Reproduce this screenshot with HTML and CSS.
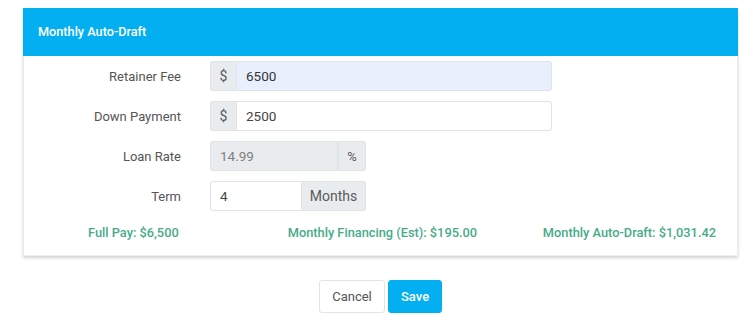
FILE: index.html
```html
<!DOCTYPE html>
<html>
<head>
<meta charset="utf-8">
<link rel="stylesheet" href="styles.css">
</head>
<body>
<div class="page">
  <div class="card">
    <div class="card-header">Monthly Auto-Draft</div>
    <div class="card-body">
      <div class="row">
        <label class="label">Retainer Fee</label>
        <div class="group wide">
          <span class="addon addon-left">$</span>
          <span class="input autofill">6500</span>
        </div>
      </div>
      <div class="row">
        <label class="label">Down Payment</label>
        <div class="group wide">
          <span class="addon addon-left">$</span>
          <span class="input">2500</span>
        </div>
      </div>
      <div class="row">
        <label class="label">Loan Rate</label>
        <div class="group narrow">
          <span class="input disabled">14.99</span>
          <span class="addon addon-right pct">%</span>
        </div>
      </div>
      <div class="row">
        <label class="label">Term</label>
        <div class="group narrow">
          <span class="input">4</span>
          <span class="addon addon-right months">Months</span>
        </div>
      </div>
      <div class="summary">
        <span class="sum">Full Pay: $6,500</span>
        <span class="sum mid">Monthly Financing (Est): $195.00</span>
        <span class="sum right">Monthly Auto-Draft: $1,031.42</span>
      </div>
    </div>
  </div>
  <div class="actions">
    <button class="btn btn-cancel">Cancel</button>
    <button class="btn btn-save">Save</button>
  </div>
</div>
</body>
</html>
```
FILE: styles.css
```css
* { box-sizing: border-box; }
html, body { margin: 0; padding: 0; background: #fff; }
body { font-family: Roboto, "Noto Sans", sans-serif; color: #333; }
.page { padding: 8px 16px 0 23px; }
.card {
  background: #fff;
  border: 1px solid #ececec;
  border-top: none;
  box-shadow: 0 2px 3px rgba(0,0,0,0.18);
}
.card-header {
  background: #03aff0;
  color: #fff;
  font-size: 12.7px;
  font-weight: 500;
  height: 48px;
  line-height: 48px;
  padding-left: 15px;
  margin: 0 -1px;
}
.card-body { padding: 5px 0 0 0; height: 199px; }
.row {
  display: grid;
  grid-template-columns: 157px auto;
  column-gap: 29px;
  align-items: center;
  margin-bottom: 10px;
  height: 30px;
}
.label {
  text-align: right;
  font-size: 13px;
  color: #555;
}
.group { display: flex; height: 30px; }
.group.wide { width: 342px; }
.group.narrow { width: 156px; }
.addon {
  background: #e9ecef;
  border: 1px solid #dfe2e6;
  color: #5a5a5a;
  font-size: 14px;
  display: flex;
  align-items: center;
  justify-content: center;
}
.addon-left { width: 26px; border-radius: 3px 0 0 3px; border-right: none; }
.addon-right { border-radius: 0 3px 3px 0; }
.pct { width: 28px; font-size: 13px; }
.months { width: 64px; border-left: none; }
.input {
  flex: 1;
  border: 1px solid #dfe2e6;
  font-size: 13.5px;
  color: #444;
  display: flex;
  align-items: center;
  padding-left: 9px;
  background: #fff;
  border-radius: 0 3px 3px 0;
}
.group.narrow .input { border-radius: 3px 0 0 3px; }
.input.autofill { background: #e8f0fe; color: #333; }
.input.disabled { background: #e9ecef; color: #808080; }
.summary {
  display: flex;
  padding: 4px 21px 0 64px;
  font-size: 12.8px;
  font-weight: 500;
  color: #47ab88;
}
.sum.mid { margin-left: 109px; }
.sum.right { margin-left: auto; }
.actions {
  display: flex;
  justify-content: center;
  gap: 3px;
  margin-top: 24px;
}
.btn {
  font-family: Roboto, "Noto Sans", sans-serif;
  font-size: 13px;
  height: 33px;
  border-radius: 3px;
  padding: 0 12px;
  cursor: pointer;
}
.btn-cancel { background: #fff; border: 1px solid #e3e3e3; color: #555; width: 66px; }
.btn-save { background: #03aff0; border: 1px solid #03aff0; color: #fff; font-weight: 500; width: 54px; }
```
